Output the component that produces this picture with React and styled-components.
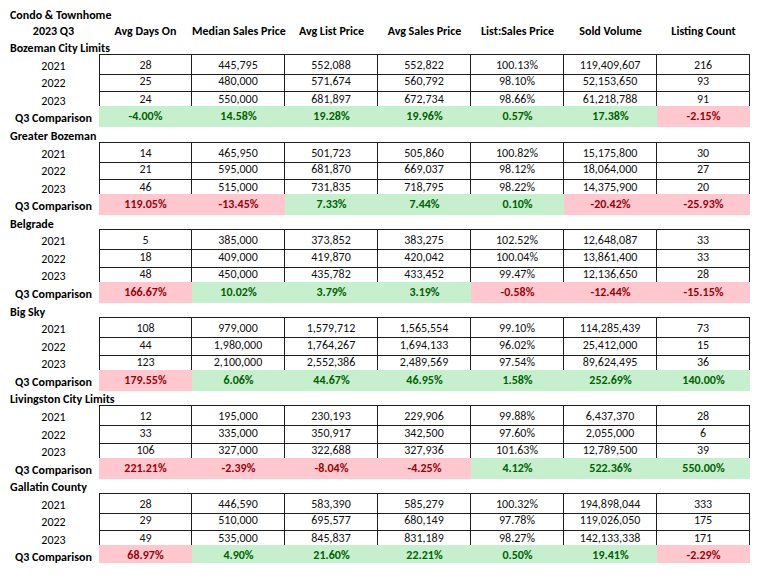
import React from "react";
import styled, { createGlobalStyle } from "styled-components";

const GlobalStyle = createGlobalStyle`
  html, body {
    margin: 0;
    padding: 0;
    background: #ffffff;
  }
  body {
    font-family: Carlito, Calibri, Lato, "Liberation Sans", sans-serif;
    color: #000;
  }
  * {
    box-sizing: border-box;
  }
`;

const COLS = "91px repeat(7, 93px)";
const ROW_H = "17.57px";

const Sheet = styled.div`
  padding: 1px 0 0 8px;
  width: 760px;
  font-size: 12px;
`;

const Row = styled.div`
  display: grid;
  grid-template-columns: ${COLS};
  height: ${ROW_H};
`;

const Title = styled.div`
  grid-column: 1 / span 3;
  padding: 6px 0 0 2px;
  font-weight: 700;
  line-height: 17px;
  white-space: nowrap;
`;

const HeadCell = styled.div`
  text-align: center;
  padding-top: 4px;
  font-weight: 700;
  line-height: 17px;
  white-space: nowrap;
`;

const Label = styled.div`
  text-align: ${(p) => (p.$left ? "left" : "center")};
  padding: 4px 0 0 ${(p) => (p.$left ? "2px" : "0")};
  font-weight: ${(p) => (p.$bold ? 700 : 400)};
  line-height: 17px;
  white-space: nowrap;
`;

const DataCell = styled.div`
  text-align: center;
  padding-top: 2px;
  line-height: 16px;
  color: #111;
  border-right: 1px solid #1e1e1e;
  border-bottom: 1px solid #1e1e1e;
  border-left: ${(p) => (p.$first ? "1px solid #1e1e1e" : "none")};
  border-top: ${(p) => (p.$top ? "1px solid #1e1e1e" : "none")};
  white-space: nowrap;
`;

const DiffCell = styled.div`
  height: 100%;
  text-align: center;
  padding-top: 2px;
  font-weight: 700;
  line-height: 17px;
  background: ${(p) => (p.$up ? "#c6efce" : "#ffc7ce")};
  color: ${(p) => (p.$up ? "#006100" : "#9c0006")};
  white-space: nowrap;
`;

const headers = [
  "Avg Days On",
  "Median Sales Price",
  "Avg List Price",
  "Avg Sales Price",
  "List:Sales Price",
  "Sold Volume",
  "Listing Count",
];

const sections = [
  {
    name: "Bozeman City Limits",
    rows: [
      ["2021", "28", "445,795", "552,088", "552,822", "100.13%", "119,409,607", "216"],
      ["2022", "25", "480,000", "571,674", "560,792", "98.10%", "52,153,650", "93"],
      ["2023", "24", "550,000", "681,897", "672,734", "98.66%", "61,218,788", "91"],
    ],
    diff: [["-4.00%", 1], ["14.58%", 1], ["19.28%", 1], ["19.96%", 1], ["0.57%", 1], ["17.38%", 1], ["-2.15%", 0]],
  },
  {
    name: "Greater Bozeman",
    rows: [
      ["2021", "14", "465,950", "501,723", "505,860", "100.82%", "15,175,800", "30"],
      ["2022", "21", "595,000", "681,870", "669,037", "98.12%", "18,064,000", "27"],
      ["2023", "46", "515,000", "731,835", "718,795", "98.22%", "14,375,900", "20"],
    ],
    diff: [["119.05%", 0], ["-13.45%", 0], ["7.33%", 1], ["7.44%", 1], ["0.10%", 1], ["-20.42%", 0], ["-25.93%", 0]],
  },
  {
    name: "Belgrade",
    rows: [
      ["2021", "5", "385,000", "373,852", "383,275", "102.52%", "12,648,087", "33"],
      ["2022", "18", "409,000", "419,870", "420,042", "100.04%", "13,861,400", "33"],
      ["2023", "48", "450,000", "435,782", "433,452", "99.47%", "12,136,650", "28"],
    ],
    diff: [["166.67%", 0], ["10.02%", 1], ["3.79%", 1], ["3.19%", 1], ["-0.58%", 0], ["-12.44%", 0], ["-15.15%", 0]],
  },
  {
    name: "Big Sky",
    rows: [
      ["2021", "108", "979,000", "1,579,712", "1,565,554", "99.10%", "114,285,439", "73"],
      ["2022", "44", "1,980,000", "1,764,267", "1,694,133", "96.02%", "25,412,000", "15"],
      ["2023", "123", "2,100,000", "2,552,386", "2,489,569", "97.54%", "89,624,495", "36"],
    ],
    diff: [["179.55%", 0], ["6.06%", 1], ["44.67%", 1], ["46.95%", 1], ["1.58%", 1], ["252.69%", 1], ["140.00%", 1]],
  },
  {
    name: "Livingston City Limits",
    rows: [
      ["2021", "12", "195,000", "230,193", "229,906", "99.88%", "6,437,370", "28"],
      ["2022", "33", "335,000", "350,917", "342,500", "97.60%", "2,055,000", "6"],
      ["2023", "106", "327,000", "322,688", "327,936", "101.63%", "12,789,500", "39"],
    ],
    diff: [["221.21%", 0], ["-2.39%", 0], ["-8.04%", 0], ["-4.25%", 0], ["4.12%", 1], ["522.36%", 1], ["550.00%", 1]],
  },
  {
    name: "Gallatin County",
    rows: [
      ["2021", "28", "446,590", "583,390", "585,279", "100.32%", "194,898,044", "333"],
      ["2022", "29", "510,000", "695,577", "680,149", "97.78%", "119,026,050", "175"],
      ["2023", "49", "535,000", "845,837", "831,189", "98.27%", "142,133,338", "171"],
    ],
    diff: [["68.97%", 0], ["4.90%", 1], ["21.60%", 1], ["22.21%", 1], ["0.50%", 1], ["19.41%", 1], ["-2.29%", 0]],
  },
];

const Section = ({ data }) => (
  <>
    <Row>
      <Label $left $bold>{data.name}</Label>
    </Row>
    {data.rows.map((r, ri) => (
      <Row key={r[0]}>
        <Label>{r[0]}</Label>
        {r.slice(1).map((v, i) => (
          <DataCell key={i} $first={i === 0} $top={ri === 0}>
            {v}
          </DataCell>
        ))}
      </Row>
    ))}
    <Row>
      <Label $bold>Q3 Comparison</Label>
      {data.diff.map(([v, up], i) => (
        <DiffCell key={i} $up={up === 1}>
          {v}
        </DiffCell>
      ))}
    </Row>
  </>
);

export default function App() {
  return (
    <>
      <GlobalStyle />
      <Sheet>
        <Row>
          <Title>Condo &amp; Townhome</Title>
        </Row>
        <Row>
          <HeadCell>2023 Q3</HeadCell>
          {headers.map((h) => (
            <HeadCell key={h}>{h}</HeadCell>
          ))}
        </Row>
        {sections.map((s) => (
          <Section key={s.name} data={s} />
        ))}
      </Sheet>
    </>
  );
}
